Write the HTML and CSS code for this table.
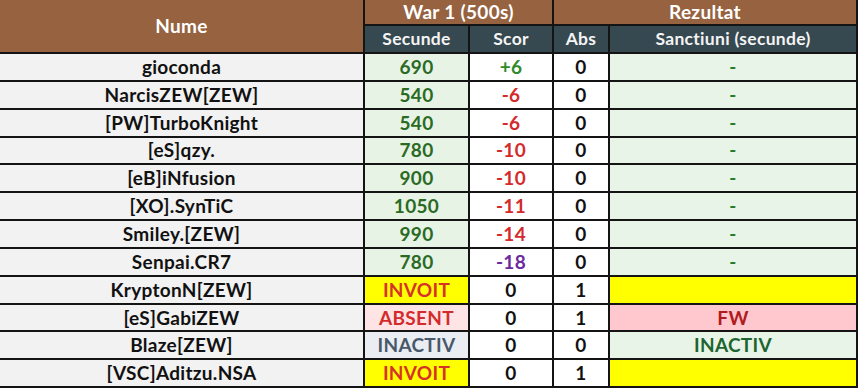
FILE: index.html
```html
<!DOCTYPE html>
<html lang="ro">
<head>
<meta charset="utf-8">
<title>War 1</title>
<link rel="stylesheet" href="styles.css">
</head>
<body>
<table class="war">
  <colgroup>
    <col class="c-name"><col class="c-sec"><col class="c-scor"><col class="c-abs"><col class="c-sanc">
  </colgroup>
  <thead>
    <tr class="h1">
      <th rowspan="2" class="brown first">Nume</th>
      <th colspan="2" class="brown">War 1 (500s)</th>
      <th colspan="2" class="brown">Rezultat</th>
    </tr>
    <tr class="h2">
      <th class="slate">Secunde</th>
      <th class="slate">Scor</th>
      <th class="slate">Abs</th>
      <th class="slate">Sanctiuni (secunde)</th>
    </tr>
  </thead>
  <tbody>
    <tr><td class="name">gioconda</td><td class="sec">690</td><td class="scor pos">+6</td><td class="abs">0</td><td class="sanc">-</td></tr>
    <tr><td class="name">NarcisZEW[ZEW]</td><td class="sec">540</td><td class="scor neg">-6</td><td class="abs">0</td><td class="sanc">-</td></tr>
    <tr><td class="name">[PW]TurboKnight</td><td class="sec">540</td><td class="scor neg">-6</td><td class="abs">0</td><td class="sanc">-</td></tr>
    <tr><td class="name">[eS]qzy.</td><td class="sec">780</td><td class="scor neg">-10</td><td class="abs">0</td><td class="sanc">-</td></tr>
    <tr><td class="name">[eB]iNfusion</td><td class="sec">900</td><td class="scor neg">-10</td><td class="abs">0</td><td class="sanc">-</td></tr>
    <tr><td class="name">[XO].SynTiC</td><td class="sec">1050</td><td class="scor neg">-11</td><td class="abs">0</td><td class="sanc">-</td></tr>
    <tr><td class="name">Smiley.[ZEW]</td><td class="sec">990</td><td class="scor neg">-14</td><td class="abs">0</td><td class="sanc">-</td></tr>
    <tr><td class="name">Senpai.CR7</td><td class="sec">780</td><td class="scor low">-18</td><td class="abs">0</td><td class="sanc">-</td></tr>
    <tr><td class="name">KryptonN[ZEW]</td><td class="sec invoit">INVOIT</td><td class="scor">0</td><td class="abs">1</td><td class="sanc yellow"></td></tr>
    <tr><td class="name">[eS]GabiZEW</td><td class="sec absent">ABSENT</td><td class="scor">0</td><td class="abs">1</td><td class="sanc fw">FW</td></tr>
    <tr><td class="name">Blaze[ZEW]</td><td class="sec inactiv">INACTIV</td><td class="scor">0</td><td class="abs">0</td><td class="sanc inact">INACTIV</td></tr>
    <tr><td class="name">[VSC]Aditzu.NSA</td><td class="sec invoit">INVOIT</td><td class="scor">0</td><td class="abs">1</td><td class="sanc yellow"></td></tr>
  </tbody>
</table>
</body>
</html>
```
FILE: styles.css
```css
html, body {
  margin: 0;
  padding: 0;
  background: #ffffff;
}

.war {
  border-collapse: collapse;
  table-layout: fixed;
  width: 857px;
  font-family: Lato, "Open Sans", sans-serif;
  font-weight: 700;
  font-size: 19px;
  letter-spacing: 0.3px;
  color: #111;
}

.c-name { width: 364px; }
.c-sec { width: 105px; }
.c-scor { width: 84px; }
.c-abs { width: 56px; }
.c-sanc { width: 248px; }

.war th,
.war td {
  border: 2px solid #141414;
  padding: 0;
  text-align: center;
  vertical-align: middle;
  line-height: 20px;
  white-space: nowrap;
}

.war tr > :first-child { border-left: none; }
.war thead tr.h1 th { border-top: none; }

.h1 th { height: 24px; }
.h2 th { height: 26px; }
tbody td { height: 25.85px; }

.brown {
  background: #96623f;
  color: #ffffff;
  font-size: 19px;
}

.slate {
  background: #364850;
  color: #f4f4f4;
  font-size: 17.5px;
}

.name { background: #f2f2f2; color: #111; }
.sec { background: #e7f3e5; color: #2a6a24; }
.scor { background: #ffffff; color: #111; }
.abs { background: #ffffff; color: #111; }
.sanc { background: #e8f4e8; color: #2a7a2a; }

.pos { color: #2e8a2a; }
.neg { color: #d32b2b; }
.low { color: #6a2aa0; }

.invoit { background: #ffff00; color: #d6312a; }
.absent { background: #ffe4e6; color: #d32b2b; }
.inactiv { background: #eaeef2; color: #48586a; }
.yellow { background: #ffff00; }
.fw { background: #ffc7ce; color: #b01c1c; }
.inact { color: #1e6430; }
```
